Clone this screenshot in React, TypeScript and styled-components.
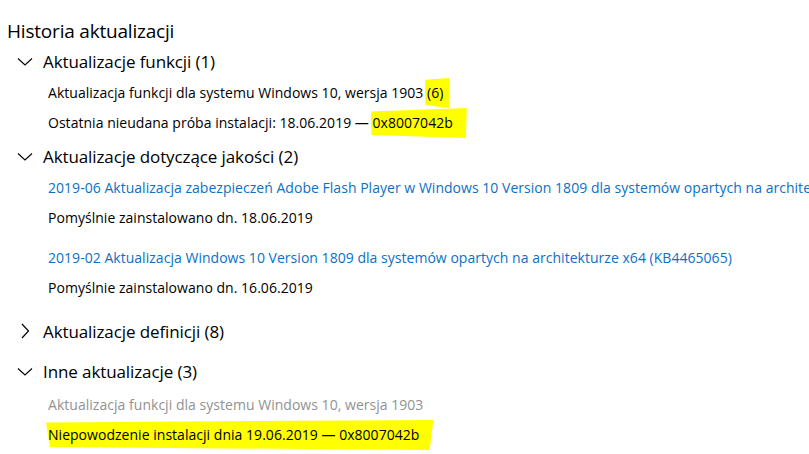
import React from 'react';
import styled, { createGlobalStyle } from 'styled-components';

const GlobalStyle = createGlobalStyle`
  html, body {
    margin: 0;
    padding: 0;
    background: #ffffff;
  }
  body {
    font-family: "Open Sans", "Noto Sans", "Liberation Sans", sans-serif;
    color: #000000;
    overflow: hidden;
  }
`;

interface Entry {
  title: React.ReactNode;
  status?: React.ReactNode;
  kind?: 'plain' | 'link' | 'muted';
}

interface Group {
  name: string;
  open: boolean;
  top: number;
  listTop?: number;
  entries: Entry[];
}

const Page = styled.div`
  width: 809px;
  height: 454px;
  padding: 16px 0 0 7px;
  box-sizing: border-box;
  overflow: hidden;
  white-space: nowrap;
`;

const Title = styled.h1`
  margin: 0;
  font-size: 19px;
  font-weight: 400;
  line-height: 30px;
  letter-spacing: -0.2px;
`;

const Section = styled.section<{ $top: number }>`
  margin-top: ${p => p.$top}px;
`;

const Header = styled.div`
  display: flex;
  align-items: center;
  height: 30px;
  padding-left: 10px;
  gap: 10px;
  font-size: 17px;
  letter-spacing: -0.1px;
`;

const Chevron = styled.svg`
  width: 16px;
  height: 16px;
  flex: none;
`;

const List = styled.div<{ $top: number }>`
  display: flex;
  flex-direction: column;
  gap: 10px;
  padding: ${p => p.$top}px 0 0 41px;
`;

const Item = styled.div`
  display: flex;
  flex-direction: column;
`;

const Line = styled.div<{ $kind?: 'plain' | 'link' | 'muted' }>`
  height: 30px;
  line-height: 30px;
  font-size: 14px;
  letter-spacing: 0.03px;
  color: ${p => (p.$kind === 'link' ? '#0c70c6' : p.$kind === 'muted' ? '#929292' : '#000000')};
`;

const Mark = styled.span<{ $tilt?: number; $tail?: number }>`
  background: #ffff00;
  padding: 5px ${p => p.$tail ?? 6}px 6px 2px;
  margin: 0 ${p => -(p.$tail ?? 6)}px 0 -2px;
  clip-path: polygon(0 ${p => 6 + (p.$tilt ?? 0)}%, 100% 0, 99% 100%, 1% 90%);
`;

const Down = () => (
  <Chevron viewBox="0 0 16 16">
    <path d="M1 5.5 L8 12 L15 5.5" fill="none" stroke="#000" strokeWidth="1.1" />
  </Chevron>
);

const Right = () => (
  <Chevron viewBox="0 0 16 16">
    <path d="M5 1 L11.5 8 L5 15" fill="none" stroke="#000" strokeWidth="1.2" />
  </Chevron>
);

const groups: Group[] = [
  {
    name: 'Aktualizacje funkcji (1)',
    open: true,
    top: 0,
    entries: [
      {
        title: (
          <>
            Aktualizacja funkcji dla systemu Windows 10, wersja 1903 <Mark>(6)</Mark>
          </>
        ),
        status: (
          <>
            Ostatnia nieudana próba instalacji: 18.06.2019 — <Mark $tilt={6} $tail={14}>0x8007042b</Mark>
          </>
        ),
      },
    ],
  },
  {
    name: 'Aktualizacje dotyczące jakości (2)',
    open: true,
    top: 3,
    entries: [
      {
        kind: 'link',
        title:
          '2019-06 Aktualizacja zabezpieczeń Adobe Flash Player w Windows 10 Version 1809 dla systemów opartych na architekturze x64 (KB4503308)',
        status: 'Pomyślnie zainstalowano dn. 18.06.2019',
      },
      {
        kind: 'link',
        title:
          '2019-02 Aktualizacja Windows 10 Version 1809 dla systemów opartych na architekturze x64 (KB4465065)',
        status: 'Pomyślnie zainstalowano dn. 16.06.2019',
      },
    ],
  },
  { name: 'Aktualizacje definicji (8)', open: false, top: 13, entries: [] },
  {
    name: 'Inne aktualizacje (3)',
    open: true,
    top: 10,
    listTop: 4,
    entries: [
      {
        kind: 'muted',
        title: 'Aktualizacja funkcji dla systemu Windows 10, wersja 1903',
        status: (
          <Mark $tilt={2} $tail={14}>
            Niepowodzenie instalacji dnia 19.06.2019 — 0x8007042b
          </Mark>
        ),
      },
    ],
  },
];

export default function App() {
  return (
    <>
      <GlobalStyle />
      <Page>
        <Title>Historia aktualizacji</Title>
        {groups.map(g => (
          <Section key={g.name} $top={g.top}>
            <Header>
              {g.open ? <Down /> : <Right />}
              <span>{g.name}</span>
            </Header>
            {g.open && (
              <List $top={g.listTop ?? 2}>
                {g.entries.map((e, j) => (
                  <Item key={j}>
                    <Line $kind={e.kind}>{e.title}</Line>
                    {e.status && <Line>{e.status}</Line>}
                  </Item>
                ))}
              </List>
            )}
          </Section>
        ))}
      </Page>
    </>
  );
}
